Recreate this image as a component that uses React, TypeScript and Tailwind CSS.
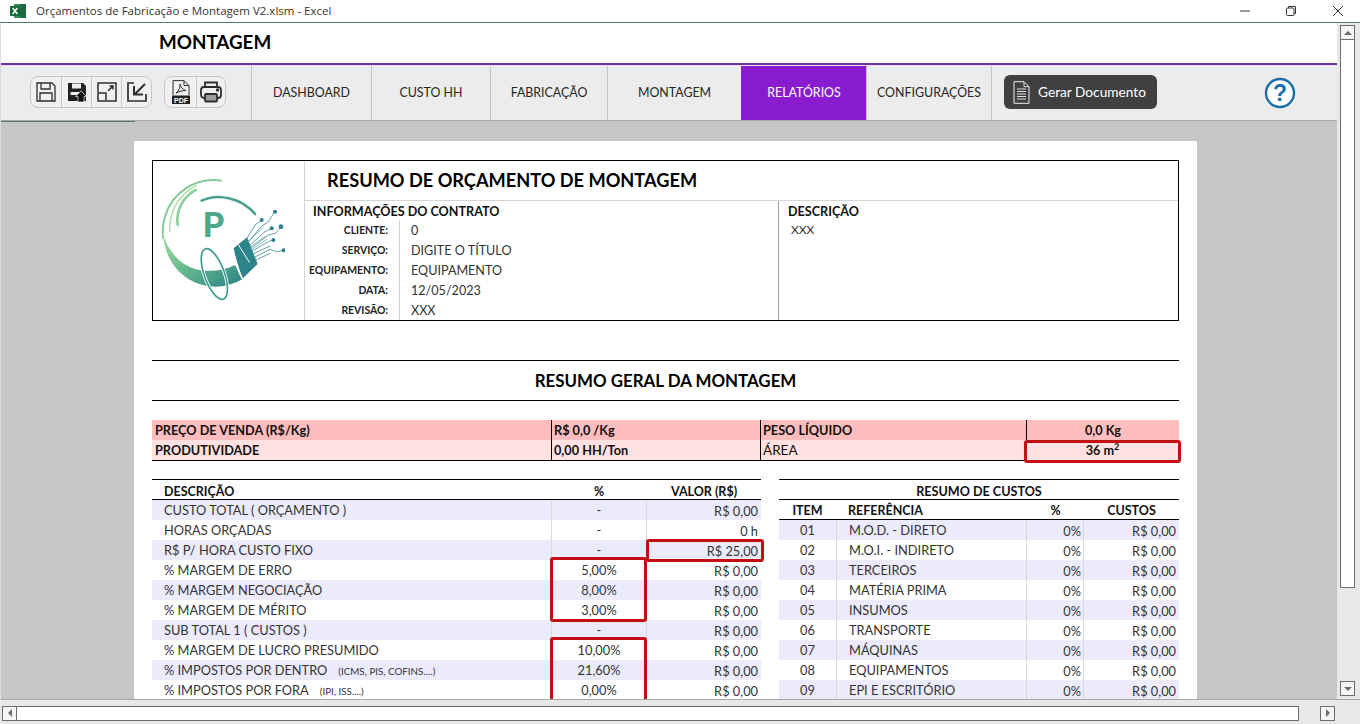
import React from "react"

const sans = "font-['Lato','Liberation_Sans',sans-serif]"

const tabs = [
  { label: "DASHBOARD", w: "w-[120px]" },
  { label: "CUSTO HH", w: "w-[119px]" },
  { label: "FABRICAÇÃO", w: "w-[117px]" },
  { label: "MONTAGEM", w: "w-[134px]" },
  { label: "RELATÓRIOS", w: "w-[125px]", active: true },
  { label: "CONFIGURAÇÕES", w: "w-[125px]" },
]

const contractRows = [
  ["CLIENTE:", "0"],
  ["SERVIÇO:", "DIGITE O TÍTULO"],
  ["EQUIPAMENTO:", "EQUIPAMENTO"],
  ["DATA:", "12/05/2023"],
  ["REVISÃO:", "XXX"],
]

const budgetRows = [
  { d: "CUSTO TOTAL ( ORÇAMENTO )", p: "-", v: "R$ 0,00" },
  { d: "HORAS ORÇADAS", p: "-", v: "0 h" },
  { d: "R$ P/ HORA CUSTO FIXO", p: "-", v: "R$ 25,00" },
  { d: "% MARGEM DE ERRO", p: "5,00%", v: "R$ 0,00" },
  { d: "% MARGEM NEGOCIAÇÃO", p: "8,00%", v: "R$ 0,00" },
  { d: "% MARGEM DE MÉRITO", p: "3,00%", v: "R$ 0,00" },
  { d: "SUB TOTAL 1 ( CUSTOS )", p: "-", v: "R$ 0,00" },
  { d: "% MARGEM DE LUCRO PRESUMIDO", p: "10,00%", v: "R$ 0,00" },
  { d: "% IMPOSTOS POR DENTRO", note: "(ICMS, PIS, COFINS....)", p: "21,60%", v: "R$ 0,00" },
  { d: "% IMPOSTOS POR FORA", note: "(IPI, ISS....)", p: "0,00%", v: "R$ 0,00" },
]

const costRows = [
  ["01", "M.O.D. - DIRETO"],
  ["02", "M.O.I. - INDIRETO"],
  ["03", "TERCEIROS"],
  ["04", "MATÉRIA PRIMA"],
  ["05", "INSUMOS"],
  ["06", "TRANSPORTE"],
  ["07", "MÁQUINAS"],
  ["08", "EQUIPAMENTOS"],
  ["09", "EPI E ESCRITÓRIO"],
]

function ExcelIcon() {
  return (
    <svg width="16" height="16" viewBox="0 0 16 16">
      <rect x="4" y="1" width="12" height="14" rx="1" fill="#2f8a57" />
      <rect x="10" y="1" width="6" height="14" fill="#1d6b40" />
      <rect x="0" y="3" width="10" height="10" rx="1" fill="#0f6b3a" />
      <path d="M2.6 5l4.8 6M7.4 5l-4.8 6" stroke="#fff" strokeWidth="1.5" />
    </svg>
  )
}

function Logo() {
  return (
    <svg width="130" height="140" viewBox="0 0 390 420">
      <defs>
        <linearGradient id="lg" x1="0" y1="0" x2="1" y2="1">
          <stop offset="0" stopColor="#a6dca0" />
          <stop offset="0.5" stopColor="#62b78e" />
          <stop offset="1" stopColor="#2a7f85" />
        </linearGradient>
      </defs>
      {/* arcos */}
      <path d="M200 32C120 20 50 70 30 140 22 165 22 185 24 205" fill="none" stroke="#86c99a" strokeWidth="6" />
      <path d="M125 46C75 70 42 120 44 185" fill="none" stroke="#a6dca0" strokeWidth="4" />
      <path d="M68 165C62 120 85 80 122 60" fill="none" stroke="#8fd0a0" strokeWidth="8" strokeLinecap="round" />
      <path d="M140 92C190 68 262 85 300 132" fill="none" stroke="#4a9f8e" strokeWidth="8" strokeLinecap="round" />
      <path d="M24 190C40 252 90 300 150 302 182 304 215 298 240 285L262 328C230 346 195 353 165 349 90 340 28 280 24 190Z" fill="url(#lg)" />
      <text x="175" y="200" fontFamily="Lato, Liberation Sans, sans-serif" fontWeight="900" fontSize="104" fill="#4ba98a" textAnchor="middle">P</text>
      {/* cabo */}
      <path d="M234 236L276 202 308 282 262 326Z" fill="#2a8489" />
      <path d="M250 224L284 278" stroke="#fff" strokeWidth="3" />
      <path d="M234 236C240 270 250 305 262 326" fill="none" stroke="#fff" strokeWidth="5" />
      <ellipse cx="178" cy="312" rx="30" ry="80" transform="rotate(-20 178 312)" fill="none" stroke="#fff" strokeWidth="10" />
      <ellipse cx="178" cy="312" rx="30" ry="80" transform="rotate(-20 178 312)" fill="none" stroke="#3c9c90" strokeWidth="5" />
      {/* fibras */}
      <g fill="none" stroke="#3f8f97" strokeWidth="2.500">
        <path d="M272 212L300 165 320 150" />
        <path d="M278 220L318 170 340 155 360 125" />
        <path d="M282 228L330 185 350 175" />
        <path d="M286 236L340 195 362 190 378 170" />
        <path d="M290 244L340 215 355 210" />
        <path d="M294 252L345 228" />
        <path d="M298 262L345 238 365 245 386 241" />
        <path d="M300 272L345 250" />
        <path d="M276 216L326 172M284 232L332 198M288 240L336 208" strokeWidth="1.800" />
      </g>
      <g fill="#2f7f8c">
        <circle cx="320" cy="150" r="6" />
        <circle cx="360" cy="125" r="6" />
        <circle cx="350" cy="175" r="6" />
        <circle cx="378" cy="170" r="7" />
        <circle cx="355" cy="210" r="6" />
        <circle cx="386" cy="241" r="6" />
      </g>
    </svg>
  )
}

function ToolIcon({ name }: { name: string }) {
  const s = "#2e2e2e"
  if (name === "save")
    return (
      <svg width="20" height="20" viewBox="0 0 20 20" fill="none" stroke={s} strokeWidth="1.3">
        <path d="M1 1h15l3 3v15H1z" />
        <path d="M5 1v6h9V1M4 19v-8h12v8" />
      </svg>
    )
  if (name === "saveas")
    return (
      <svg width="20" height="20" viewBox="0 0 20 20">
        <path d="M1 1h15l3 3v15H1z" fill="#222" />
        <path d="M5 1.500v5h9v-5z" fill="#eee" />
        <path d="M3.500 10h10v3h-10z" fill="#eee" />
        <path d="M14 9l5.500 5.500H17V20h-6v-5.500H8.500z" fill="#111" stroke="#eee" strokeWidth="0.7" />
      </svg>
    )
  if (name === "expand")
    return (
      <svg width="20" height="20" viewBox="0 0 20 20" fill="none" stroke={s} strokeWidth="1.5">
        <path d="M1 10V1h18v18h-9" />
        <rect x="1" y="11" width="8" height="8" />
        <path d="M11 9l5-5M12.500 4H16v3.500" />
      </svg>
    )
  if (name === "shrink")
    return (
      <svg width="20" height="20" viewBox="0 0 20 20" fill="none" stroke={s} strokeWidth="1.7">
        <path d="M7 1H1v18h18v-7" />
        <path d="M18 2L8 12M7 4v8.500h9" strokeWidth="2" />
      </svg>
    )
  if (name === "pdf")
    return (
      <svg width="18" height="24" viewBox="0 0 18 24">
        <path d="M1 15V.6h11l5 5V15" fill="none" stroke={s} strokeWidth="1" />
        <path d="M12 .6v5h5" fill="none" stroke={s} strokeWidth="1" />
        <path d="M4 13c3-2 4.500-6 4-9 .5 3 3 6 6 6.500-3 0-7 1-10 2.500z" fill="none" stroke={s} strokeWidth="1" />
        <rect x="0" y="15.500" width="18" height="8.500" fill="#222" />
        <text x="9" y="22.500" textAnchor="middle" fontSize="7" fontWeight="700" fill="#fff" fontFamily="Liberation Sans, sans-serif">PDF</text>
      </svg>
    )
  return (
    <svg width="22" height="22" viewBox="0 0 22 22" fill="none" stroke={s} strokeWidth="1.8">
      <path d="M5 6V1.500h12V6" />
      <rect x="1" y="6" width="20" height="11" rx="3" />
      <rect x="5" y="13" width="12" height="7.500" rx="1" fill="#9c9c9c" />
      <circle cx="17.500" cy="9" r="0.8" fill={s} />
    </svg>
  )
}

function ToolGroup({ items }: { items: { name: string; w: string }[] }) {
  return (
    <div className="flex h-[32px] rounded-lg border border-[#c8c8c8] bg-[#f0f0f0]">
      {items.map((it, i) => (
        <div
          key={it.name}
          className={it.w + " flex items-center justify-center " + (i > 0 ? "border-l border-[#c8c8c8]" : "")}
        >
          <ToolIcon name={it.name} />
        </div>
      ))}
    </div>
  )
}

function ScrollBtn({ dir }: { dir: "up" | "down" | "left" | "right" }) {
  const tri = {
    up: "M1 7h8L5 3z",
    down: "M1 3h8L5 7z",
    left: "M7 1v8L3 5z",
    right: "M3 1v8l4-4z",
  }[dir]
  return (
    <div className="flex h-[15px] w-[15px] shrink-0 items-center justify-center border-[1.5px] border-[#6d6d6d] bg-[#f4f4f4]">
      <svg width="10" height="10" viewBox="0 0 10 10">
        <path d={tri} fill="#6d6d6d" />
      </svg>
    </div>
  )
}

function RedBox({ className }: { className: string }) {
  return <div className={"pointer-events-none absolute rounded-[3px] border-[3px] border-[#c30f13] " + className} />
}

export default function App() {
  return (
    <div className={sans + " flex h-[724px] w-[1360px] flex-col overflow-hidden bg-[#ececec] text-[#222]"}>
      {/* barra de titulo */}
      <div className="flex h-[23px] shrink-0 items-center border-b border-[#4f7a65] bg-white">
        <div className="ml-[10px] mt-[-1px]">
          <ExcelIcon />
        </div>
        <span className="ml-[10px] font-['Open_Sans',sans-serif] text-[11.5px] text-[#333]">
          Orçamentos de Fabricação e Montagem V2.xlsm - Excel
        </span>
        <div className="ml-auto flex items-center">
          <svg width="12" height="12" viewBox="0 0 12 12" className="mr-[34px]">
            <path d="M1 6h10" stroke="#333" />
          </svg>
          <svg width="12" height="12" viewBox="0 0 12 12" className="mr-[34px]" fill="none" stroke="#333">
            <rect x="1.500" y="3" width="7.500" height="7.500" rx="1" />
            <path d="M3.500 3V1.500h7V8.500H9" />
          </svg>
          <svg width="14" height="14" viewBox="0 0 14 14" className="mr-[15px]" stroke="#333">
            <path d="M2 2l10 10M12 2L2 12" />
          </svg>
        </div>
      </div>

      <div className="flex min-h-0 flex-1">
        <div className="flex min-w-0 flex-1 flex-col border-l border-[#dcdcdc]">
          {/* cabecalho */}
          <div className="flex h-[40px] shrink-0 items-center bg-white pb-[2px] pl-[158px] text-[18.8px] font-bold text-black">
            MONTAGEM
          </div>
          <div className="h-[3px] shrink-0 border-t-2 border-[#7030a0] bg-[#f0dcf5]" />

          {/* barra de ferramentas */}
          <div className="flex h-[55px] shrink-0 items-stretch border-b border-[#a6a6a6] bg-[#ececec]">
            <div className="flex w-[250px] items-center gap-[12px] pb-[2px] pl-[29px]">
              <ToolGroup
                items={[
                  { name: "save", w: "w-[30px]" },
                  { name: "saveas", w: "w-[30px]" },
                  { name: "expand", w: "w-[30px]" },
                  { name: "shrink", w: "w-[30px]" },
                ]}
              />
              <ToolGroup
                items={[
                  { name: "pdf", w: "w-[31px]" },
                  { name: "print", w: "w-[29px]" },
                ]}
              />
            </div>
            {tabs.map((t) => (
              <div
                key={t.label}
                className={
                  t.w +
                  " flex items-center justify-center border-l pt-[1px] text-[12.4px] " +
                  (t.active ? "border-[#8a1cd0] bg-[#8a1cd0] text-white" : "border-[#c4c4c4] text-[#262626]")
                }
              >
                {t.label}
              </div>
            ))}
            <div className="flex flex-1 items-center border-l border-[#c4c4c4] pb-[2px] pl-[12px]">
              <div className="flex h-[34px] w-[153px] items-center rounded-[6px] bg-[#404040] pl-[9px] text-white">
                <svg width="17" height="23" viewBox="0 0 17 23" fill="none" stroke="#eee">
                  <path d="M1 .7h10l5 5v16.600H1z" />
                  <path d="M11 .7v5h5M4 8h9M4 10.500h9M4 13h9M4 15.500h9M4 18h9" strokeWidth="0.9" />
                </svg>
                <span className="ml-[8px] text-[13.7px]">Gerar Documento</span>
              </div>
              <svg width="32" height="32" viewBox="0 0 32 32" className="ml-[107px] mt-[2px]">
                <circle cx="16" cy="16" r="14" fill="#fff" stroke="#1b6fa8" strokeWidth="2.400" />
                <text x="16" y="24" textAnchor="middle" fontSize="23" fontWeight="700" fill="#1b6fa8" fontFamily="Liberation Sans, sans-serif">?</text>
              </svg>
            </div>
          </div>

          {/* area da planilha */}
          <div className="relative min-h-0 flex-1 overflow-hidden border-b border-[#a6a6a6] bg-[#c6c6c6] pl-[133px] pt-[20px]">
            <div className="absolute left-0 top-0 h-[1px] w-[134px] bg-[#4f7a65]" />
            <div className="h-[700px] w-[1063px] bg-white px-[18px] pt-[19px] text-[12.8px] text-[#333]">
              {/* resumo do contrato */}
              <div className="flex h-[161px] border border-black">
                <div className="w-[152px] border-r border-[#d4d4d4] pl-[2px] pt-[9px]">
                  <Logo />
                </div>
                <div className="flex min-w-0 flex-1 flex-col">
                  <div className="flex h-[40px] shrink-0 items-center border-b border-[#d4d4d4] pl-[22px] text-[18.2px] font-bold text-black">
                    RESUMO DE ORÇAMENTO DE MONTAGEM
                  </div>
                  <div className="flex flex-1">
                    <div className="w-[474px] border-r border-[#a0a0a0]">
                      <div className="h-[19px] pl-[8px] pt-[1px] text-[12.6px] font-bold leading-[19px] text-[#111]">
                        INFORMAÇÕES DO CONTRATO
                      </div>
                      {contractRows.map(([k, v]) => (
                        <div key={k} className="flex h-[20px] items-center">
                          <div className="w-[83px] whitespace-nowrap pt-[1px] text-right text-[10.4px] font-bold text-[#222]">{k}</div>
                          <div className="ml-[11px] flex h-full items-center border-l border-[#d4d4d4] pl-[11px] pt-[3px] text-[12.6px]">
                            {v}
                          </div>
                        </div>
                      ))}
                    </div>
                    <div className="flex-1 pl-[9px]">
                      <div className="h-[19px] pt-[1px] text-[12.6px] font-bold leading-[19px] text-[#111]">DESCRIÇÃO</div>
                      <div className="h-[20px] pl-[3px] text-[12px] leading-[20px]">XXX</div>
                    </div>
                  </div>
                </div>
              </div>

              {/* resumo geral */}
              <div className="mt-[39px] flex h-[41px] items-center justify-center border-y border-black pt-[1px] text-[16.9px] font-bold text-black">
                RESUMO GERAL DA MONTAGEM
              </div>

              <div className="relative mt-[19px] border-b border-black text-[12.7px] font-bold text-[#111]">
                <div className="flex h-[20px] items-center bg-[#ffbdbd]">
                  <div className="w-[399px] pl-[3px] pt-[1px]">PREÇO DE VENDA (R$/Kg)</div>
                  <div className="flex h-full w-[209px] items-center border-l border-black pl-[2px] pt-[1px]">R$ 0,0 /Kg</div>
                  <div className="flex h-full w-[266px] items-center border-l border-black pl-[2px] pt-[1px]">PESO LÍQUIDO</div>
                  <div className="flex h-full flex-1 items-center justify-center border-l border-black pt-[1px]">0,0 Kg</div>
                </div>
                <div className="flex h-[20px] items-center bg-[#ffe1e1]">
                  <div className="w-[399px] pl-[3px] pt-[1px]">PRODUTIVIDADE</div>
                  <div className="flex h-full w-[209px] items-center border-l border-black pl-[2px] pt-[1px]">0,00 HH/Ton</div>
                  <div className="flex h-full w-[266px] items-center border-l border-black pl-[2px] pt-[1px] text-[13.5px] font-normal">ÁREA</div>
                  <div className="flex h-full flex-1 items-center justify-center pt-[2px]">
                    36 m<sup className="text-[9px] leading-none">2</sup>
                  </div>
                </div>
                <RedBox className="left-[872px] top-[20px] h-[23px] w-[157px]" />
              </div>

              <div className="mt-[18px] flex items-start">
                {/* tabela principal */}
                <div className="relative w-[609px] shrink-0">
                  <div className="flex h-[21px] items-center border-y border-black pt-[5px] text-[12.5px] font-bold text-[#111]">
                    <div className="w-[399px] pl-[12px]">DESCRIÇÃO</div>
                    <div className="w-[96px] text-center">%</div>
                    <div className="flex-1 text-center">VALOR (R$)</div>
                  </div>
                  {budgetRows.map((r, i) => (
                    <div key={r.d} className={"flex h-[20px] items-center " + (i % 2 === 0 ? "bg-[#ebebfb]" : "bg-white")}>
                      <div className="w-[399px] whitespace-nowrap pl-[12px] pt-[2px]">
                        {r.d}
                        {r.note && <span className="ml-[11px] text-[9.8px]">{r.note}</span>}
                      </div>
                      <div className="flex h-full w-[96px] items-center justify-center border-x border-[#d8d8d8] pt-[2px]">{r.p}</div>
                      <div className="flex-1 pr-[3px] pt-[4px] text-right">{r.v}</div>
                    </div>
                  ))}
                  <RedBox className="left-[494px] top-[60px] h-[23px] w-[118px]" />
                  <RedBox className="left-[398px] top-[78px] h-[65px] w-[97px]" />
                  <RedBox className="left-[398px] top-[158px] h-[70px] w-[97px]" />
                </div>

                {/* resumo de custos */}
                <div className="ml-[18px] flex-1">
                  <div className="flex h-[21px] items-center justify-center border-y border-black pt-[5px] text-[12.6px] font-bold text-[#111]">
                    RESUMO DE CUSTOS
                  </div>
                  <div className="flex h-[20px] items-center border-b border-black pt-[4px] text-[12.5px] font-bold text-[#111]">
                    <div className="w-[57px] text-center">ITEM</div>
                    <div className="w-[191px] pl-[12px]">REFERÊNCIA</div>
                    <div className="w-[57px] text-center">%</div>
                    <div className="flex-1 text-center">CUSTOS</div>
                  </div>
                  {costRows.map(([n, name], i) => (
                    <div key={n} className={"flex h-[20px] items-center " + (i % 2 === 0 ? "bg-[#ebebfb]" : "bg-white")}>
                      <div className="w-[57px] pt-[2px] text-center">{n}</div>
                      <div className="flex h-full w-[191px] items-center border-x border-[#d8d8d8] pl-[12px] pt-[2px]">{name}</div>
                      <div className="flex h-full w-[57px] items-center justify-end border-r border-[#d8d8d8] pr-[2px] pt-[4px]">0%</div>
                      <div className="flex-1 pr-[3px] pt-[4px] text-right">R$ 0,00</div>
                    </div>
                  ))}
                </div>
              </div>
            </div>
          </div>
        </div>

        {/* barra de rolagem vertical */}
        <div className="flex w-[23px] shrink-0 flex-col items-start border-b border-[#a6a6a6] bg-[#e8e8e8] pl-[3px] pt-[2px]">
          <ScrollBtn dir="up" />
          <div className="h-[548px] w-[15px] border-x-[1.5px] border-b-[1.5px] border-[#6d6d6d] bg-white" />
          <div className="flex-1" />
          <div className="mb-[3px]">
            <ScrollBtn dir="down" />
          </div>
        </div>
      </div>

      {/* barra de rolagem horizontal */}
      <div className="flex h-[24px] shrink-0 items-center bg-[#e8e8e8] pl-[2px] pr-[25px] pt-[2px]">
        <ScrollBtn dir="left" />
        <div className="h-[15px] w-[1282px] rounded-r-[1px] border-y-[1.5px] border-r-[1.5px] border-[#6d6d6d] bg-white" />
        <div className="flex-1" />
        <ScrollBtn dir="right" />
      </div>
    </div>
  )
}
